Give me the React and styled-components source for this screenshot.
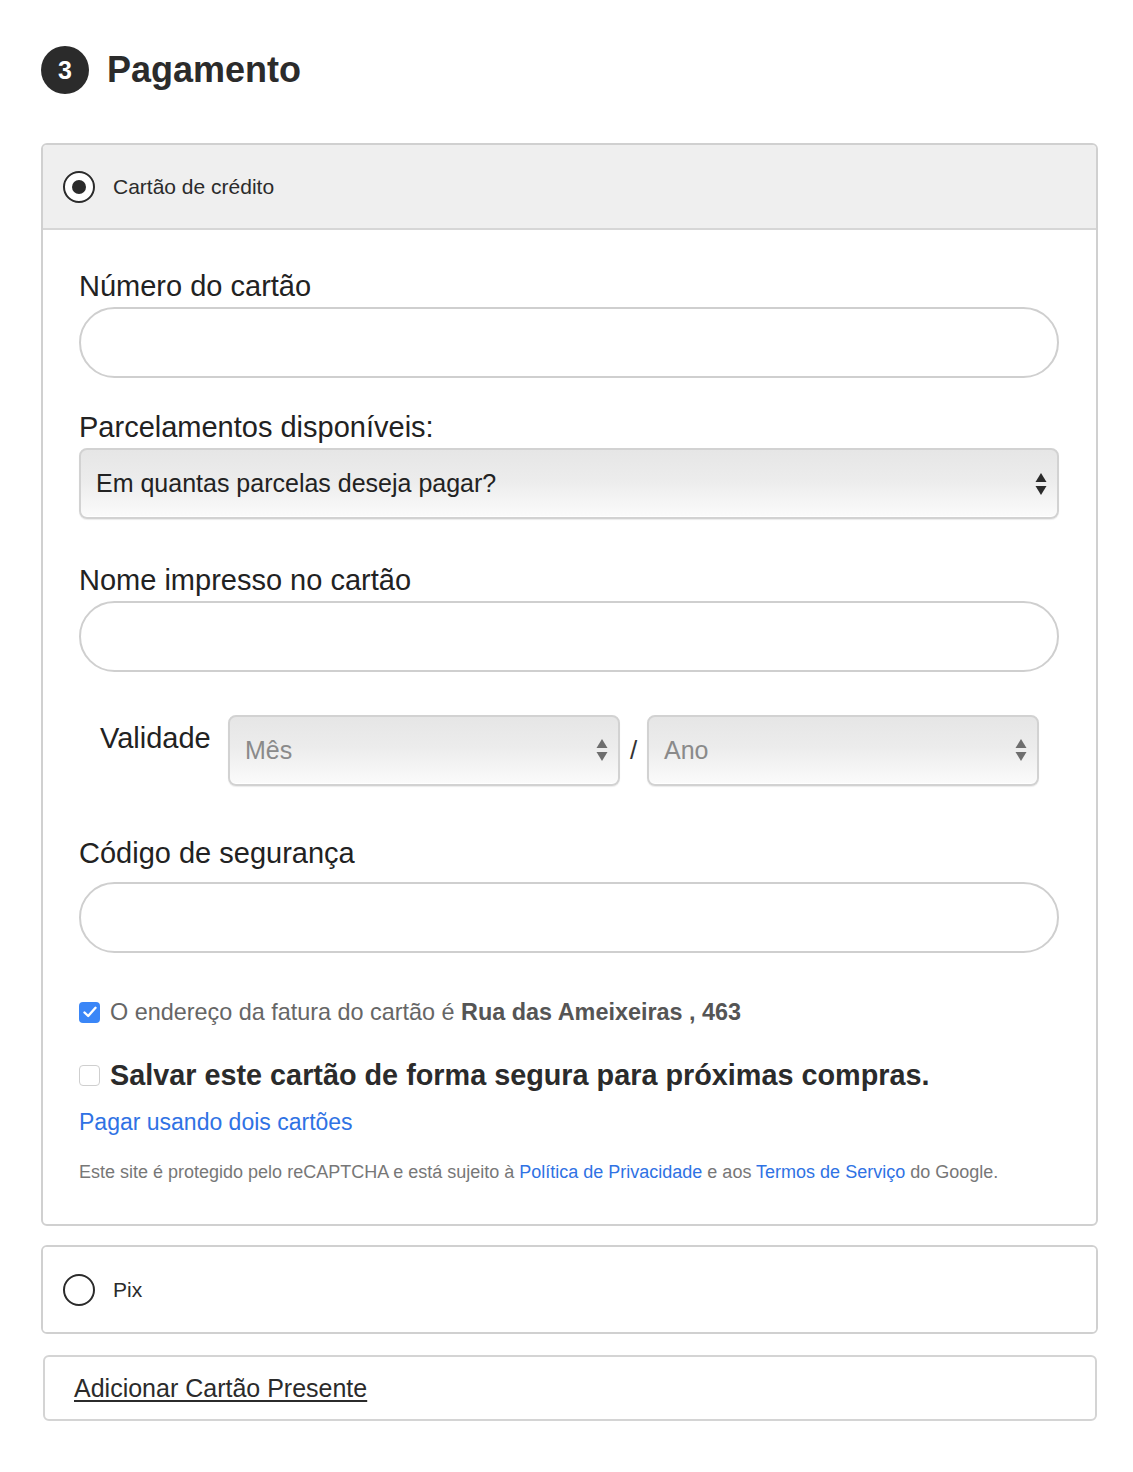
import React from "react";
import styled, { createGlobalStyle } from "styled-components";

const GlobalStyle = createGlobalStyle`
  body {
    margin: 0;
    background: #ffffff;
    font-family: "Liberation Sans", Arial, Helvetica, sans-serif;
    color: #222;
  }
`;

const Page = styled.div`
  width: 1057px;
  padding: 46px 0 40px 41px;
  display: flex;
  flex-direction: column;
`;

const Header = styled.div`
  display: flex;
  align-items: center;
  gap: 18px;
  margin-bottom: 49px;
`;

const StepBadge = styled.div`
  width: 48px;
  height: 48px;
  border-radius: 50%;
  background: #2b2b2b;
  color: #fff;
  font-weight: 700;
  font-size: 25px;
  display: flex;
  align-items: center;
  justify-content: center;
`;

const Title = styled.h1`
  margin: 0;
  font-size: 36px;
  font-weight: 700;
  color: #2b2b2b;
  line-height: 48px;
`;

const Card = styled.div`
  border: 2px solid #d0d0d0;
  border-radius: 6px;
  overflow: hidden;
  background: #fff;
  margin-bottom: ${(p) => p.$gap || 0}px;
`;

const OptionRow = styled.div`
  height: ${(p) => p.$h}px;
  display: flex;
  align-items: center;
  gap: 18px;
  padding-left: 20px;
  background: ${(p) => (p.$active ? "#efefef" : "#fff")};
  border-bottom: ${(p) => (p.$active ? "2px solid #d6d6d6" : "none")};
  font-size: 21px;
  color: #2b2b2b;
`;

const Radio = styled.span`
  width: 28px;
  height: 28px;
  border: 2px solid #2b2b2b;
  border-radius: 50%;
  background: #fff;
  display: flex;
  align-items: center;
  justify-content: center;

  &::after {
    content: "";
    width: 14px;
    height: 14px;
    border-radius: 50%;
    background: ${(p) => (p.$checked ? "#2b2b2b" : "transparent")};
  }
`;

const CardBody = styled.div`
  padding: 39px 37px 40px 36px;
  display: flex;
  flex-direction: column;
`;

const Label = styled.div`
  font-size: 29px;
  line-height: 34px;
  color: #222;
  margin-top: ${(p) => p.$mt || 0}px;
  margin-bottom: ${(p) => p.$mb || 4}px;
`;

const TextInput = styled.div`
  height: 67px;
  border: 2px solid #cfcfcf;
  border-radius: 36px;
  background: #fff;
`;

const SelectBox = styled.div`
  flex: ${(p) => (p.$grow ? "1" : "none")};
  height: 67px;
  border: 2px solid #d2d2d2;
  border-radius: 8px;
  background: linear-gradient(#e6e6e6, #ececec 45%, #fbfbfb);
  box-shadow: inset 0 -1px 0 #fff, 0 1px 1px rgba(0, 0, 0, 0.08);
  display: flex;
  align-items: center;
  justify-content: space-between;
  padding: 0 10px 0 15px;
  font-size: 25px;
  color: ${(p) => (p.$muted ? "#8a8a8a" : "#222")};
`;

const Arrows = ({ color }) => (
  <svg width="12" height="24" viewBox="0 0 12 24">
    <path d="M6 1 L11.5 10 H0.5 Z" fill={color} />
    <path d="M6 23 L11.5 14 H0.5 Z" fill={color} />
  </svg>
);

const ExpiryRow = styled.div`
  display: flex;
  align-items: center;
  margin-top: 42px;
  padding-right: 20px;
  height: 72px;
`;

const ExpiryLabel = styled.div`
  font-size: 29px;
  line-height: 34px;
  color: #222;
  align-self: flex-start;
  margin: 7px 19px 0 21px;
  width: 109px;
  white-space: nowrap;
`;

const Slash = styled.span`
  font-size: 26px;
  color: #333;
  width: 27px;
  text-align: center;
`;

const CheckRow = styled.div`
  display: flex;
  align-items: center;
  gap: 10px;
  margin-top: ${(p) => p.$mt}px;
  font-size: ${(p) => p.$size}px;
  line-height: ${(p) => p.$lh}px;
  color: ${(p) => p.$color};
  font-weight: ${(p) => (p.$bold ? 700 : 400)};

  b {
    color: #555;
  }
`;

const Checkbox = styled.span`
  width: 21px;
  height: 21px;
  box-sizing: border-box;
  border-radius: 4px;
  border: ${(p) => (p.$checked ? "none" : "1.5px solid #cfcfcf")};
  background: ${(p) => (p.$checked ? "#3a86f7" : "#fff")};
  display: flex;
  align-items: center;
  justify-content: center;
  flex: none;
`;

const BlueLink = styled.a`
  color: #2f72e4;
  text-decoration: none;
  font-size: ${(p) => p.$size || 18}px;
`;

const TwoCards = styled(BlueLink)`
  margin-top: 14px;
  line-height: 32px;
`;

const Legal = styled.p`
  margin: 22px 0 0;
  font-size: 18px;
  color: #777;
  line-height: 24px;
`;

const GiftBox = styled.div`
  margin: 0 1px 0 2px;
  height: 62px;
  border: 2px solid #d4d4d4;
  border-radius: 6px;
  display: flex;
  align-items: center;
  padding-left: 29px;
`;

const GiftLink = styled.a`
  font-size: 25px;
  color: #2b2b2b;
  text-decoration: underline;
  text-underline-offset: 3px;
`;

export default function App() {
  return (
    <>
      <GlobalStyle />
      <Page>
        <Header>
          <StepBadge>3</StepBadge>
          <Title>Pagamento</Title>
        </Header>

        <Card $gap={19}>
          <OptionRow $active $h={83}>
            <Radio $checked />
            <span>Cartão de crédito</span>
          </OptionRow>
          <CardBody>
            <Label>Número do cartão</Label>
            <TextInput />

            <Label $mt={32}>Parcelamentos disponíveis:</Label>
            <SelectBox>
              <span>Em quantas parcelas deseja pagar?</span>
              <Arrows color="#2b2b2b" />
            </SelectBox>

            <Label $mt={44}>Nome impresso no cartão</Label>
            <TextInput />

            <ExpiryRow>
              <ExpiryLabel>Validade</ExpiryLabel>
              <SelectBox $grow $muted>
                <span>Mês</span>
                <Arrows color="#6e6e6e" />
              </SelectBox>
              <Slash>/</Slash>
              <SelectBox $grow $muted>
                <span>Ano</span>
                <Arrows color="#6e6e6e" />
              </SelectBox>
            </ExpiryRow>

            <Label $mt={50} $mb={12}>Código de segurança</Label>
            <TextInput />

            <CheckRow $mt={46} $size={23.4} $lh={26} $color="#666">
              <Checkbox $checked>
                <svg width="14" height="12" viewBox="0 0 14 12">
                  <path d="M1.5 6.5 L5.2 10 L12.5 1.8" fill="none" stroke="#fff" strokeWidth="2.4" strokeLinecap="round" strokeLinejoin="round" />
                </svg>
              </Checkbox>
              <span>
                O endereço da fatura do cartão é <b>Rua das Ameixeiras , 463</b>
              </span>
            </CheckRow>

            <CheckRow $mt={34} $size={28.8} $lh={33} $color="#2b2b2b" $bold>
              <Checkbox />
              <span>Salvar este cartão de forma segura para próximas compras.</span>
            </CheckRow>

            <TwoCards $size={23} href="#">Pagar usando dois cartões</TwoCards>

            <Legal>
              Este site é protegido pelo reCAPTCHA e está sujeito à{" "}
              <BlueLink href="#">Política de Privacidade</BlueLink> e aos{" "}
              <BlueLink href="#">Termos de Serviço</BlueLink> do Google.
            </Legal>
          </CardBody>
        </Card>

        <Card $gap={21}>
          <OptionRow $h={85}>
            <Radio />
            <span>Pix</span>
          </OptionRow>
        </Card>

        <GiftBox>
          <GiftLink href="#">Adicionar Cartão Presente</GiftLink>
        </GiftBox>
      </Page>
    </>
  );
}
